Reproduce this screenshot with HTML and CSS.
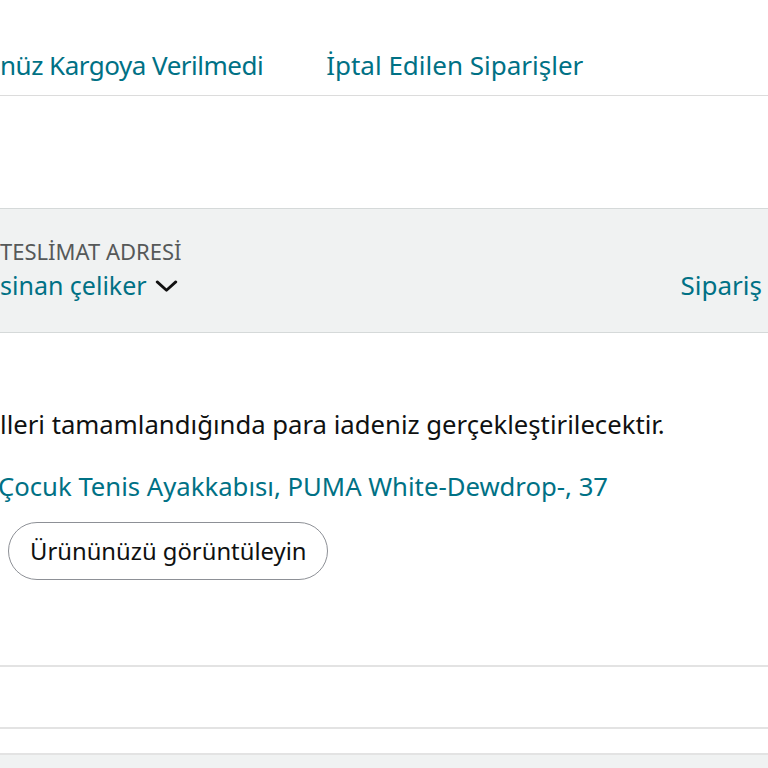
FILE: index.html
```html
<!DOCTYPE html>
<html lang="tr">
  <head>
    <meta charset="UTF-8" />
    <meta name="viewport" content="width=device-width, initial-scale=1.0" />
    <title>Siparişlerim</title>
    <link rel="stylesheet" href="styles.css">
  </head>
  <body>
    <main>
      <nav class="tabs">
        <a href="#" class="tab">nüz Kargoya Verilmedi</a>
        <a href="#" class="tab">İptal Edilen Siparişler</a>
      </nav>

      <section class="order-card">
        <div class="order-header">
          <div class="ship-to">
            <div class="label">TESLİMAT ADRESİ</div>
            <a href="#" class="ship-name">sinan çeliker
              <svg class="chevron" viewBox="0 0 24 14" width="23" height="13">
                <path d="M2 2 L12 11 L22 2" fill="none" stroke="#111" stroke-width="3" stroke-linecap="round" stroke-linejoin="round" />
              </svg>
            </a>
          </div>
          <a href="#" class="order-details">Sipariş</a>
        </div>

        <div class="order-body">
          <p class="status-text">lleri tamamlandığında para iadeniz gerçekleştirilecektir.</p>
          <a href="#" class="product-link">Çocuk Tenis Ayakkabısı, PUMA White-Dewdrop-, 37</a>
          <button class="view-btn">Ürününüzü görüntüleyin</button>
        </div>

        <div class="order-footer"></div>
      </section>

      <section class="order-card next">
        <div class="order-header"></div>
      </section>
    </main>
  </body>
</html>
```

FILE: styles.css
```css
body {
  margin: 0;
  font-family: "Noto Sans", "Open Sans", sans-serif;
  color: #0f1111;
  background-color: #fff;
  overflow: hidden;
  width: 768px;
  height: 768px;
}

a {
  color: #007185;
  text-decoration: none;
}

.tabs {
  display: flex;
  gap: 63px;
  height: 96px;
  box-sizing: border-box;
  align-items: flex-end;
  padding-bottom: 12px;
  border-bottom: 1px solid #dcdcdc;
}

.tab {
  font-size: 26px;
  line-height: 36px;
}

.tab:first-child {
  letter-spacing: -0.5px;
}

.order-card {
  margin-top: 112px;
  margin-left: -20px;
  margin-right: -20px;
  border-top: 1px solid #d5d9d9;
}

.order-header {
  display: flex;
  justify-content: space-between;
  align-items: flex-end;
  background-color: #f0f2f2;
  height: 124px;
  box-sizing: border-box;
  padding: 0 26px 30px 20px;
  border-bottom: 1px solid #d5d9d9;
}

.label {
  font-size: 22px;
  color: #565959;
  line-height: 26px;
  margin-bottom: 4px;
}

.ship-name {
  font-size: 25px;
  line-height: 34px;
  display: inline-flex;
  align-items: center;
  gap: 8px;
}

.chevron {
  margin-top: 3px;
}

.order-details {
  font-size: 26px;
  line-height: 34px;
}

.order-body {
  padding: 74px 0 0 20px;
  height: 334px;
  box-sizing: border-box;
  border-bottom: 2px solid #e3e3e3;
}

.status-text {
  margin: 0;
  font-size: 25.7px;
  line-height: 36px;
}

.product-link {
  display: block;
  margin: 26px 0 0 -2px;
  font-size: 25.7px;
  line-height: 36px;
}

.view-btn {
  margin: 17px 0 0 8px;
  height: 58px;
  padding: 0 21px;
  font-family: inherit;
  font-size: 23.8px;
  color: #0f1111;
  background-color: #fff;
  border: 1px solid #8d9096;
  border-radius: 29px;
}

.order-footer {
  height: 62px;
  box-sizing: border-box;
  border-bottom: 2px solid #e3e3e3;
}

.order-card.next {
  margin-top: 24px;
  border-top: 2px solid #e3e3e3;
}
```
